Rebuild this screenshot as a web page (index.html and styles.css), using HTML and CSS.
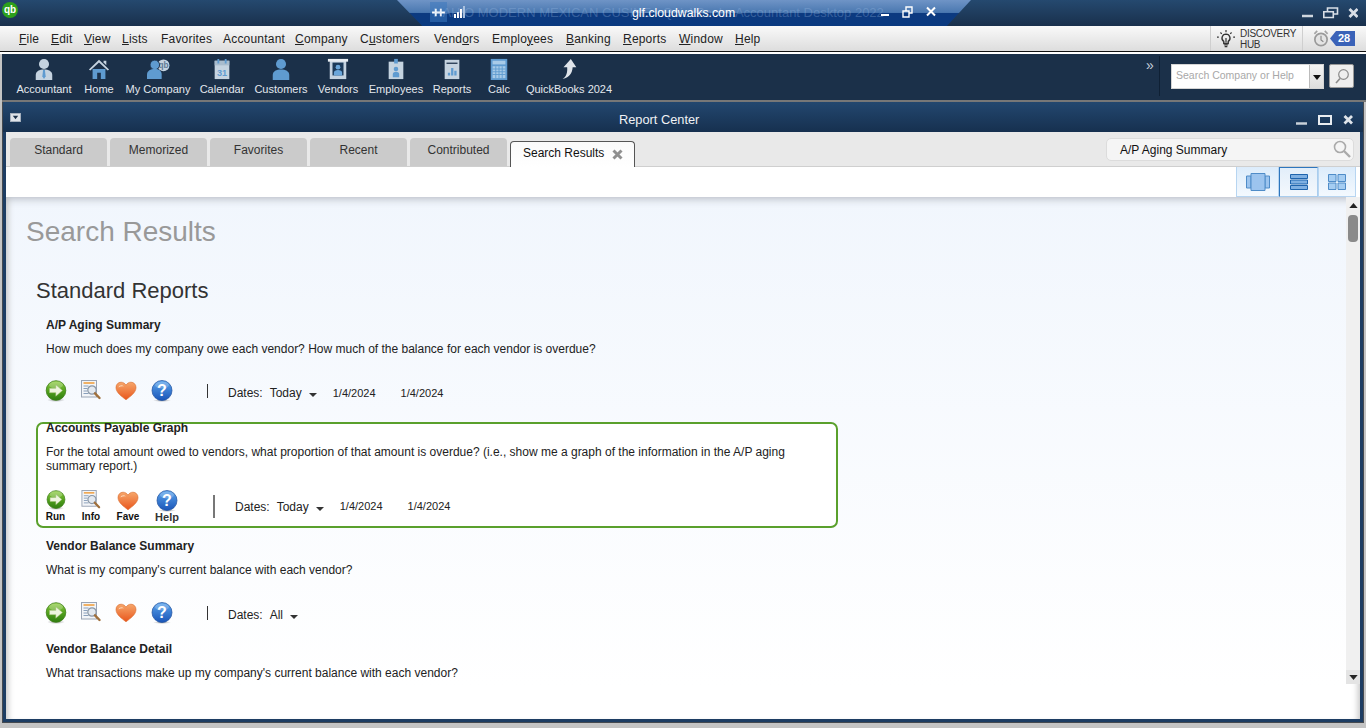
FILE: index.html
```html
<!DOCTYPE html>
<html lang="en">
<head>
<meta charset="utf-8">
<title>Report Center</title>
<link rel="stylesheet" href="styles.css">
</head>
<body>
<svg class="defs" aria-hidden="true">
  <defs>
    <linearGradient id="gGreen" x1="0" y1="0" x2="0" y2="1"><stop offset="0" stop-color="#8fce3f"/><stop offset=".55" stop-color="#4f9e1c"/><stop offset="1" stop-color="#2f7d10"/></linearGradient>
    <linearGradient id="gHeart" x1="0" y1="0" x2="0" y2="1"><stop offset="0" stop-color="#f6a66a"/><stop offset="1" stop-color="#e9561c"/></linearGradient>
    <linearGradient id="gBlue" x1="0" y1="0" x2="0" y2="1"><stop offset="0" stop-color="#5aa4ec"/><stop offset="1" stop-color="#1a55b8"/></linearGradient>
    <radialGradient id="gShade"><stop offset="0" stop-color="#000" stop-opacity=".35"/><stop offset="1" stop-color="#000" stop-opacity="0"/></radialGradient>
    <symbol id="i-run" viewBox="0 0 22 22">
      <ellipse cx="11" cy="20" rx="9" ry="2" fill="url(#gShade)"/>
      <circle cx="11" cy="10.5" r="9.8" fill="url(#gGreen)" stroke="#3c7d17" stroke-width=".8"/>
      <ellipse cx="11" cy="5" rx="7" ry="3.500" fill="#fff" fill-opacity=".25"/>
      <path d="M4.500 8.300h6.300V4.800l6.700 5.700-6.700 5.700v-3.500H4.500z" fill="#eef5df" stroke="#9ab86f" stroke-width=".5"/>
    </symbol>
    <symbol id="i-info" viewBox="0 0 20 22">
      <rect x=".5" y=".5" width="15" height="16.500" fill="#f3f5f8" stroke="#9aa4b4"/>
      <path d="M2.500 3h11" stroke="#f0a040" stroke-width="1.600"/>
      <path d="M2.500 6h5M2.500 8.500h4M2.500 11h4M2.500 13.500h5" stroke="#8aa0bc"/>
      <circle cx="11" cy="10" r="4.200" fill="#dfe6ee" fill-opacity=".85" stroke="#8b97a6" stroke-width="1.200"/>
      <path d="M14 13.300l4.500 4.700" stroke="#a0703c" stroke-width="2.400" stroke-linecap="round"/>
    </symbol>
    <symbol id="i-fave" viewBox="0 0 22 20">
      <path d="M11 18.800C6.500 15.300 1 11.600 1 6.500 1 3.200 3.400 1.200 6 1.200c2.200 0 3.900 1.100 5 3 1.100-1.900 2.800-3 5-3 2.600 0 5 2 5 5.300 0 5.100-5.500 8.800-10 12.300z" fill="url(#gHeart)" stroke="#d9692c" stroke-width=".6"/>
      <path d="M3.500 6.500C4 4.300 7 3.400 9 5.500 6.800 5 5 5.500 3.500 6.500z" fill="#fcd9bc"/>
    </symbol>
    <symbol id="i-help" viewBox="0 0 22 22">
      <ellipse cx="11" cy="20.500" rx="9" ry="1.500" fill="url(#gShade)"/>
      <circle cx="11" cy="10.500" r="10" fill="url(#gBlue)" stroke="#1c4f9e" stroke-width=".7"/>
      <ellipse cx="11" cy="5" rx="7" ry="3.500" fill="#fff" fill-opacity=".22"/>
      <text x="11" y="15.500" text-anchor="middle" class="qmark">?</text>
    </symbol>
    <symbol id="i-person" viewBox="0 0 24 24">
      <circle cx="12" cy="6.500" r="5.500"/>
      <path d="M3 24v-5.500C3 14.500 7 12.500 12 12.500s9 2 9 6V24z"/>
    </symbol>
  </defs>
</svg>

<div class="app">
  <header class="titlebar">
    <svg class="qb-logo" viewBox="0 0 16 16"><circle cx="8" cy="8" r="8" fill="#2ca01c"/><text x="8" y="11" text-anchor="middle" class="qb-text">qb</text></svg>
    <svg class="w-ctl" viewBox="0 0 56 12"><path d="M0 9h11" stroke="#cfd6de" stroke-width="2.500"/><path d="M21.800 4.800h9.500v5.700h-9.500z" fill="none" stroke="#d8dee6" stroke-width="1.600"/><path d="M25.500 4V1h10v6h-3.500" fill="none" stroke="#d8dee6" stroke-width="1.600"/><path d="M47.500 2l8 8M55.500 2l-8 8" stroke="#d8dee6" stroke-width="2.800"/></svg>
  </header>

  <div class="session">
    <span class="pin"><svg viewBox="0 0 14 12" class="pin-ico"><path d="M0 6h14" stroke="#fff" stroke-width="2"/><path d="M4 2v8M9.500 2v8" stroke="#fff" stroke-width="2"/></svg></span>
    <svg viewBox="0 0 14 14" class="signal"><path d="M1 10h2v4H1zM4 8h2v6H4zM7 5h2v9H7z" fill="#fff"/><path d="M10 2h2v12h-2z" fill="#a9c0de"/></svg>
    <span class="ghost">HAHIO MODERN MEXICAN CUSINE - QuickBooks Accountant Desktop 2022</span>
    <span class="host">glf.cloudwalks.com</span>
    <svg class="session-ctl" viewBox="0 0 56 12"><path d="M0 9h8" stroke="#fff" stroke-width="2"/><path d="M22 5h6v6h-6zM25 5V1h6v6h-3" fill="none" stroke="#fff" stroke-width="1.400"/><path d="M46 1.500l8 8M54 1.500l-8 8" stroke="#fff" stroke-width="2"/></svg>
  </div>

  <nav class="menubar">
    <ul class="menu">
      <li><u>F</u>ile</li><li><u>E</u>dit</li><li><u>V</u>iew</li><li><u>L</u>ists</li><li>Favorites</li><li>Accountant</li><li><u>C</u>ompany</li><li>C<u>u</u>stomers</li><li>Vend<u>o</u>rs</li><li>Emplo<u>y</u>ees</li><li><u>B</u>anking</li><li><u>R</u>eports</li><li><u>W</u>indow</li><li><u>H</u>elp</li>
    </ul>
    <div class="hub">
      <svg class="bulb" viewBox="0 0 20 20"><path d="M10 4.500a4.500 4.500 0 0 0-2.500 8.200V15h5v-2.300A4.500 4.500 0 0 0 10 4.500z" fill="none" stroke="#333" stroke-width="1.500"/><path d="M8 16.500h4M8.500 18.500h3M10 0v2.500M2 8H0M20 8h-2M3.800 2.800l1.500 1.500M16.200 2.800l-1.500 1.500M10 9v5" stroke="#333" stroke-width="1.300"/></svg>
      <span class="hub-text">DISCOVERY<br>HUB</span>
    </div>
    <div class="alerts">
      <svg class="clock" viewBox="0 0 16 18"><circle cx="8" cy="10" r="6.500" fill="#e4e4e4" stroke="#9a9a9a" stroke-width="1.800"/><path d="M8 6v4.500l2.500 2" fill="none" stroke="#888" stroke-width="1.200"/><path d="M1 4l3-3M15 4l-3-3" stroke="#a5a5a5" stroke-width="1.800"/></svg>
      <span class="badge">28</span>
    </div>
  </nav>

  <div class="toolbar">
    <div class="tools">
      <div class="tool"><svg class="t-ico" viewBox="0 0 24 24"><use href="#i-person" class="fill-light"/><path d="M11 13h2l.8 7-1.800 3-1.800-3z" fill="#5f9bd0"/></svg><span>Accountant</span></div>
      <div class="tool"><svg class="t-ico" viewBox="0 0 24 24"><path d="M5 12h14v11h-5v-7h-4v7H5z" fill="#5f9bd0"/><path d="M1 12.500L12 2l11 10.500-1.500 1.200L12 5 2.500 13.700z" fill="#c5d3e0"/><path d="M17 3h3v5l-3-3z" fill="#c5d3e0"/></svg><span>Home</span></div>
      <div class="tool"><svg class="t-ico t-wide" viewBox="0 0 26 24"><circle cx="19" cy="8" r="6.500" fill="#c5d3e0"/><text x="19" y="11" text-anchor="middle" class="mini-qb">qb</text><circle cx="9.500" cy="7.500" r="5.200" fill="#5f9bd0" stroke="#1b3049"/><path d="M1 23v-5c0-4 4-6 8.500-6S17 14 17 18v5z" fill="#5f9bd0"/></svg><span>My Company</span></div>
      <div class="tool"><svg class="t-ico" viewBox="0 0 24 24"><path d="M4 3h16v20H4z" fill="#c5d3e0"/><path d="M4 3h16v5H4z" fill="#a9bccd"/><path d="M7 1h2v5H7zM15 1h2v5h-2z" fill="#5f9bd0" /><text x="12" y="20" text-anchor="middle" class="cal-num">31</text></svg><span>Calendar</span></div>
      <div class="tool"><svg class="t-ico" viewBox="0 0 24 24"><use href="#i-person" class="fill-blue"/></svg><span>Customers</span></div>
      <div class="tool"><svg class="t-ico" viewBox="0 0 24 24"><path d="M3 3h18v20H3z" fill="#c5d3e0"/><path d="M1 1h22v3H1z" fill="#e8edf2"/><path d="M6 5h12v14H6z" fill="#1c3a5a"/><circle cx="12" cy="10" r="2.600" fill="#6aa6da"/><path d="M7.500 19v-3c0-2 2-3 4.500-3s4.500 1 4.500 3v3z" fill="#6aa6da"/></svg><span>Vendors</span></div>
      <div class="tool"><svg class="t-ico" viewBox="0 0 24 24"><path d="M4 4h16v19H4z" fill="#c5d3e0"/><path d="M10 1h4v5h-4z" fill="#5f9bd0"/><circle cx="12" cy="12" r="2.500" fill="#5f9bd0"/><path d="M8.500 21v-3.500c0-1.500 1.500-2.500 3.500-2.500s3.500 1 3.500 2.500V21z" fill="#5f9bd0"/></svg><span>Employees</span></div>
      <div class="tool"><svg class="t-ico" viewBox="0 0 24 24"><path d="M4 2h16v21H4z" fill="#c5d3e0"/><path d="M6 5h12v1.500H6z" fill="#2a3f58"/><path d="M7.500 16h2.500v3H7.500zM11 11h2.500v8H11zM14.500 14H17v5h-2.500z" fill="#5f9bd0"/></svg><span>Reports</span></div>
      <div class="tool"><svg class="t-ico" viewBox="0 0 24 24"><path d="M3 1h18v23H3z" fill="#5f9bd0"/><path d="M5 3h14v4H5z" fill="#a8cbe8"/><path d="M5 9h14v13H5z" fill="#a8cbe8"/><path d="M5 12h14M5 15h14M5 18h14M8.500 9v13M12 9v13M15.500 9v13" stroke="#5f9bd0"/></svg><span>Calc</span></div>
      <div class="tool"><svg class="t-ico" viewBox="0 0 24 24"><path d="M14 1l6 9h-4c-.5 6-3 11-11 13 4-3 5.500-7 5-13H6z" fill="#dfe4ea"/></svg><span>QuickBooks 2024</span></div>
    </div>
    <span class="more">»</span>
    <div class="tb-search">
      <div class="tb-input"><span class="tb-ph">Search Company or Help</span><span class="tb-drop"></span></div>
      <button class="tb-go" type="button"><svg viewBox="0 0 16 16" class="tb-lens"><circle cx="9.500" cy="6.500" r="4.800" fill="none" stroke="#8a8a8a" stroke-width="1.200"/><path d="M6 10.500l-4 4.500" stroke="#8a8a8a" stroke-width="1.600"/></svg></button>
    </div>
  </div>
  <div class="tb-rule"></div>

  <main class="window">
    <div class="win-title">
      <svg class="sys-ico" viewBox="0 0 12 10"><rect x=".5" y=".5" width="11" height="9" fill="#dfe4ea" stroke="#aab4c0"/><path d="M3 3h6L6 7z" fill="#1b3049"/></svg>
      <span class="win-name">Report Center</span>
      <svg class="win-btns" viewBox="0 0 57 10"><path d="M0 8.500h11" stroke="#c9d0d8" stroke-width="2.500"/><path d="M23 1h12v8H23z" fill="none" stroke="#e8ecf0" stroke-width="2"/><path d="M48.500 1l7.500 7.500M56 1l-7.500 7.500" stroke="#dfe4ea" stroke-width="2.800"/></svg>
    </div>

    <div class="tabbar">
      <div class="tab">Standard</div>
      <div class="tab">Memorized</div>
      <div class="tab">Favorites</div>
      <div class="tab">Recent</div>
      <div class="tab">Contributed</div>
      <div class="tab tab-active">Search Results <svg class="tab-x" viewBox="0 0 11 11"><path d="M1.500 1.500l8 8M9.500 1.500l-8 8" stroke="#8f8f8f" stroke-width="3"/></svg></div>
      <div class="rc-search">
        <span>A/P Aging Summary</span>
        <svg class="rc-lens" viewBox="0 0 18 18"><circle cx="7" cy="7" r="5.500" fill="none" stroke="#aaa" stroke-width="1.600"/><path d="M11 11l6 6" stroke="#aaa" stroke-width="2.400"/></svg>
      </div>
    </div>

    <div class="viewbar">
      <div class="views">
        <div class="view"><svg viewBox="0 0 24 18" class="v-ico"><path d="M.5 3h4.500v12H.5zM19 3h4.500v12H19z" fill="#9cc4ee" stroke="#4f8cc8"/><path d="M5 .5h14v17H5z" fill="#9cc4ee" stroke="#4f8cc8"/></svg></div>
        <div class="view view-on"><svg viewBox="0 0 18 16" class="v-ico2"><path d="M.5.500h17v4H.5zM.5 6h17v4H.5zM.5 11.500h17v4H.5z" fill="#7fb0e2" stroke="#1f64ad"/></svg></div>
        <div class="view"><svg viewBox="0 0 18 16" class="v-ico2"><path d="M.5.500h7.500v7H.5zM10 .500h7.500v7H10zM.5 9h7.500v6.500H.5zM10 9h7.500v6.500H10z" fill="#a5cdf2" stroke="#4f8cc8"/></svg></div>
      </div>
    </div>

    <div class="body">
      <div class="scrollrow">
        <div class="results">
          <h1 class="page-head">Search Results</h1>
          <h2 class="sec-head">Standard Reports</h2>

          <section class="report r-first">
            <h3 class="r-title">A/P Aging Summary</h3>
            <p class="r-desc">How much does my company owe each vendor? How much of the balance for each vendor is overdue?</p>
            <div class="actions">
              <svg class="a-i a-run"><use href="#i-run"/></svg>
              <svg class="a-i a-info"><use href="#i-info"/></svg>
              <svg class="a-i a-fave"><use href="#i-fave"/></svg>
              <svg class="a-i a-help"><use href="#i-help"/></svg>
              <span class="divider"></span>
              <span class="d-label">Dates:</span><span class="d-val">Today</span><span class="caret"></span>
              <span class="d-from">1/4/2024</span><span class="d-to">1/4/2024</span>
            </div>
          </section>

          <section class="report r-selected">
            <h3 class="r-title">Accounts Payable Graph</h3>
            <p class="r-desc">For the total amount owed to vendors, what proportion of that amount is overdue? (i.e., show me a graph of the information in the A/P aging summary report.)</p>
            <div class="actions actions-lab">
              <div class="lab-btn b-run"><svg class="a-i a-run"><use href="#i-run"/></svg><span>Run</span></div>
              <div class="lab-btn b-info"><svg class="a-i a-info"><use href="#i-info"/></svg><span>Info</span></div>
              <div class="lab-btn b-fave"><svg class="a-i a-fave"><use href="#i-fave"/></svg><span>Fave</span></div>
              <div class="lab-btn b-help"><svg class="a-i a-help"><use href="#i-help"/></svg><span>Help</span></div>
              <span class="divider divider-big"></span>
              <span class="d-label">Dates:</span><span class="d-val">Today</span><span class="caret"></span>
              <span class="d-from">1/4/2024</span><span class="d-to">1/4/2024</span>
            </div>
          </section>

          <section class="report r-third">
            <h3 class="r-title">Vendor Balance Summary</h3>
            <p class="r-desc">What is my company's current balance with each vendor?</p>
            <div class="actions">
              <svg class="a-i a-run"><use href="#i-run"/></svg>
              <svg class="a-i a-info"><use href="#i-info"/></svg>
              <svg class="a-i a-fave"><use href="#i-fave"/></svg>
              <svg class="a-i a-help"><use href="#i-help"/></svg>
              <span class="divider"></span>
              <span class="d-label">Dates:</span><span class="d-val">All</span><span class="caret"></span>
            </div>
          </section>

          <section class="report">
            <h3 class="r-title">Vendor Balance Detail</h3>
            <p class="r-desc">What transactions make up my company's current balance with each vendor?</p>
          </section>
        </div>
        <div class="scrollbar">
          <svg class="sb-arrow" viewBox="0 0 10 6"><path d="M5 0l5 6H0z" fill="#222"/></svg>
          <div class="sb-track"><div class="sb-thumb"></div></div>
          <div class="sb-down"><svg class="sb-arrow" viewBox="0 0 10 6"><path d="M0 0h10L5 6z" fill="#222"/></svg></div>
        </div>
      </div>
      <div class="body-foot"></div>
    </div>
  </main>
</div>
</body>
</html>
```
FILE: styles.css
```css
* { box-sizing: border-box; }
html, body { margin: 0; padding: 0; }
body { font-family: "Liberation Sans", Arial, sans-serif; font-size: 12px; color: #222; overflow: hidden; }
.defs { position: absolute; width: 0; height: 0; }
.qmark { font: bold 16px "Liberation Sans", sans-serif; fill: #fff; }
.qb-text { font: bold 10px "Liberation Sans", sans-serif; fill: #fff; }
.mini-qb { font: bold 9px "Liberation Sans", sans-serif; fill: #5f7b97; }
.cal-num { font: bold 10px "Liberation Sans", sans-serif; fill: #5f9bd0; }
.fill-light { fill: #c5d3e0; }
.fill-blue { fill: #5f9bd0; }

.app { position: relative; width: 1366px; height: 728px; display: flex; flex-direction: column; background: #c4c4c4; overflow: hidden; }

/* title bar */
.titlebar { height: 26px; flex: none; display: flex; align-items: flex-start; justify-content: space-between; padding: 2px 8px 0 2px; background: linear-gradient(#25496f, #19304c); }
.qb-logo { width: 16px; height: 16px; }
.w-ctl { width: 56px; height: 12px; display: block; margin-top: 5px; }

/* remote session banner */
.session { position: absolute; left: 397px; top: 0; width: 574px; height: 26px; display: flex; align-items: flex-start; clip-path: polygon(0 0, 100% 0, 95.800% 100%, 4.400% 100%); background: linear-gradient(#6f94c6 0, #4a78b0 48%, #0c3a80 50%, #0a3a80 100%); }
.pin { position: absolute; left: 33px; top: 2px; width: 17px; height: 20px; background: rgba(60, 120, 190, .55); display: flex; align-items: center; justify-content: center; }
.pin-ico { width: 13px; height: 11px; }
.signal { position: absolute; left: 56px; top: 4px; width: 14px; height: 14px; }
.ghost { position: absolute; left: 36px; top: 5px; font-size: 13px; white-space: nowrap; color: rgba(160, 190, 230, .3); }
.host { position: absolute; left: 235px; top: 6px; font-size: 12.300px; color: #fff; }
.session-ctl { position: absolute; left: 484px; top: 6px; width: 56px; height: 12px; }

/* menu */
.menubar { height: 28px; flex: none; display: flex; align-items: stretch; background: linear-gradient(#f9f9f9, #dcdcdc); border-bottom: 2px solid #fff; box-shadow: inset 0 -1px 0 #111; padding-bottom: 1px; }
.menu { list-style: none; margin: 0; padding: 0 0 0 19px; display: grid; grid-template-columns: 32px 33px 38px 39px 62px 72px 65px 74px 58px 74px 57px 56px 56px 26px; align-items: center; flex: 1; font-size: 12px; letter-spacing: .2px; color: #222; }
.menu li { white-space: nowrap; }
.hub { width: 92px; display: flex; align-items: center; gap: 5px; padding-left: 6px; border-left: 1px solid #cfcfcf; }
.bulb { width: 18px; height: 20px; flex: none; }
.hub-text { font-size: 10px; line-height: 11px; letter-spacing: -.3px; color: #333; }
.alerts { width: 64px; display: flex; align-items: center; gap: 1px; padding-left: 10px; border-left: 1px solid #cfcfcf; }
.clock { width: 16px; height: 17px; }
.badge { width: 25px; height: 15px; background: #3a62b8; color: #fff; font-weight: bold; font-size: 11px; line-height: 15px; text-align: center; clip-path: polygon(6px 0, 100% 0, 100% 100%, 6px 100%, 0 50%); padding-left: 3px; }

/* toolbar */
.toolbar { height: 46px; flex: none; margin-left: 2px; display: flex; align-items: flex-start; background: #1b3049; position: relative; }
.tools { display: grid; grid-template-columns: 68px 42px 76px 52px 66px 48px 68px 44px 50px 90px; margin-left: 8px; padding-top: 4px; flex: 1; justify-content: start; }
.tool { display: flex; flex-direction: column; align-items: center; color: #e3e8ee; font-size: 11px; white-space: nowrap; }
.t-ico { width: 22px; height: 22px; margin-bottom: 3px; }
.t-wide { width: 24px; }
.more { color: #c5cfda; font-size: 14px; line-height: 14px; margin-top: 4px; width: 13px; }
.tb-search { display: flex; gap: 5px; margin: 10px 12px 0 0; padding-left: 12px; position: relative; }
.tb-search::before { content: ""; position: absolute; left: 0; top: -8px; width: 1px; height: 40px; background: #0f2034; }
.tb-input { width: 153px; height: 25px; background: #fff; border: 1px solid #d5d5d5; display: flex; justify-content: space-between; }
.tb-ph { font-size: 10.500px; line-height: 21px; color: #a8a8a8; padding-left: 4px; }
.tb-drop { width: 14px; background: linear-gradient(#f4f4f4, #ddd) ; border-left: 1px solid #bbb; position: relative; }
.tb-drop::after { content: ""; position: absolute; left: 3px; top: 10px; border: 4px solid transparent; border-top: 5px solid #111; border-bottom: 0; }
.tb-go { width: 25px; height: 24px; padding: 3px; background: #eee; border: 1px solid #999; border-radius: 2px; display: flex; align-items: center; justify-content: center; }
.tb-lens { width: 16px; height: 16px; }
.tb-rule { height: 2px; flex: none; background: #777; margin-left: 2px; }

/* report center window */
.window { flex: 1; min-height: 0; margin: 0 2px 5px 2px; border: 1px solid #454a50; border-top: 0; display: flex; flex-direction: column; background: #1d3d63; padding: 0 3px 3px; }
.win-title { height: 30px; flex: none; margin: 0 -3px; padding: 0 10px 0 7px; display: flex; align-items: center; justify-content: space-between; background: linear-gradient(#23476f, #16304f); color: #f0f2f5; position: relative; }
.sys-ico { width: 11px; height: 9px; margin-top: 1px; }
.win-name { position: absolute; left: 616px; top: 10px; font-size: 12.800px; }
.win-btns { width: 57px; height: 10px; margin-top: 5px; }

.tabbar { height: 35px; flex: none; display: flex; align-items: flex-start; gap: 3px; padding: 6px 6px 0 4px; background: #e9e9e9; border-bottom: 1px solid #cfcfcf; position: relative; }
.tab { width: 97px; height: 28px; background: #cbcbcb; border-radius: 4px 4px 0 0; text-align: center; line-height: 24px; color: #333; }
.tab-active { width: 125px; height: 26px; margin-top: 3px; margin-bottom: -1px; background: linear-gradient(#fafafa, #fff); border: 1px solid #555; border-bottom: 0; color: #111; display: flex; align-items: center; padding: 0 0 4px 12px; gap: 8px; z-index: 1; white-space: nowrap; line-height: 16px; }
.tab-x { width: 11px; height: 11px; margin-top: 4px; }
.rc-search { margin-left: auto; width: 248px; height: 23px; background: #f5f5f5; border: 1px solid #dcdcdc; border-radius: 5px; display: flex; align-items: center; justify-content: space-between; padding: 0 2px 0 13px; color: #111; }
.rc-lens { width: 18px; height: 18px; margin-top: -2px; }

.viewbar { height: 30px; flex: none; background: #fff; display: flex; justify-content: flex-end; padding-right: 4px; position: relative; z-index: 1; }
.views { display: flex; height: 30px; }
.view { width: 43px; background: linear-gradient(#dcecfb, #f4f9fe); border: 1px solid #b7d5f1; border-top: 0; display: flex; align-items: center; justify-content: center; }
.view-on { background: linear-gradient(#e2eefa, #f4f8fc); border: 1px solid #2e76bd; border-color: #2e76bd #a9cdee #a9cdee #2e76bd; width: 39px; }
.view:last-child { width: 38px; }
.v-ico { width: 24px; height: 18px; }
.v-ico2 { width: 18px; height: 16px; }

.body { flex: 1; min-height: 0; display: flex; flex-direction: column; background: linear-gradient(#f1f6fd 0, #fff 490px); box-shadow: inset 7px 0 6px -5px #c4c4c4, inset -7px 0 6px -5px #c4c4c4; }
.scrollrow { height: 487px; flex: none; display: flex; box-shadow: inset 0 9px 8px -7px #b9bec6; }
.results { flex: 1; min-width: 0; overflow: hidden; padding: 19px 0 0 20px; }
.body-foot { flex: 1; }

.page-head { margin: 0; font-size: 28px; line-height: 32px; font-weight: normal; color: #999; }
.sec-head { margin: 30px 0 13px 10px; font-size: 22px; line-height: 26px; font-weight: normal; color: #333; }

.report { width: 802px; margin-left: 10px; padding: 0 10px; }
.r-title { margin: 0 0 9px; font-size: 12px; line-height: 16px; font-weight: bold; color: #222; }
.r-desc { margin: 0; font-size: 12px; line-height: 14px; color: #222; }
.r-first { margin-bottom: 19px; }
.r-selected { background: #fff; border: 2px solid #5aa02c; border-radius: 7px; padding: 0 8px; height: 106px; margin-bottom: 10px; }
.r-selected .r-title { margin: -4px 0 9px; }
.r-third { margin-bottom: 16px; }
.r-third .actions { margin-top: 24px; }

.actions { display: flex; align-items: center; margin: 23px 0 0 -1px; height: 24px; }
.actions .a-i + .a-i { margin-left: 14px; }
.a-i { display: block; flex: none; }
.a-run { width: 22px; height: 22px; }
.a-info { width: 20px; height: 22px; }
.a-fave { width: 22px; height: 20px; }
.a-help { width: 22px; height: 22px; }
.divider { width: 1px; height: 14px; background: #333; margin: 0 20px 0 34px; }
.d-label { margin: 4px 7px 0 0; }
.d-val { margin: 4px 7px 0 0; }
.caret { width: 0; height: 0; border: 4px solid transparent; border-top: 4px solid #333; border-bottom: 0; margin-top: 7px; }
.d-from { font-size: 11px; margin: 4px 0 0 16px; }
.d-to { font-size: 11px; margin: 4px 0 0 25px; }

.actions-lab { margin: 17px 0 0 -1px; height: 36px; align-items: flex-start; }
.lab-btn { display: flex; flex-direction: column; align-items: center; font-size: 10px; font-weight: bold; line-height: 11px; color: #111; }
.lab-btn .a-i { margin-bottom: 1px; }
.lab-btn .a-info { height: 21px; margin-bottom: 0; }
.lab-btn .a-fave { margin: 1px 0 0; }
.lab-btn .a-help { margin-bottom: 0; }
.b-run { width: 21px; }
.b-run .a-run { width: 20px; height: 20px; }
.b-info { width: 22px; margin-left: 14px; }
.b-fave { width: 24px; margin-left: 14px; }
.b-fave .a-fave { width: 24px; height: 20px; }
.b-help { width: 26px; margin-left: 14px; font-size: 11px; font-weight: bold; color: #333; }
.divider-big { width: 2px; height: 23px; background: #777; margin: 5px 20px 0 33px; }
.actions-lab .d-label, .actions-lab .d-val, .actions-lab .d-from, .actions-lab .d-to { margin-top: 10px; }
.actions-lab .caret { margin-top: 17px; }

/* scrollbar */
.scrollbar { width: 14px; flex: none; display: flex; flex-direction: column; background: #f0f0f0; }
.sb-arrow { width: 9px; height: 5px; display: block; margin: 6px auto 0; flex: none; }
.sb-track { flex: 1; padding: 7px 2px 0; }
.sb-thumb { height: 27px; background: #8a8a8a; border-radius: 4px; }
.sb-down { height: 14px; background: #e4e4e4; flex: none; }
.sb-down .sb-arrow { margin-top: 5px; }
```
